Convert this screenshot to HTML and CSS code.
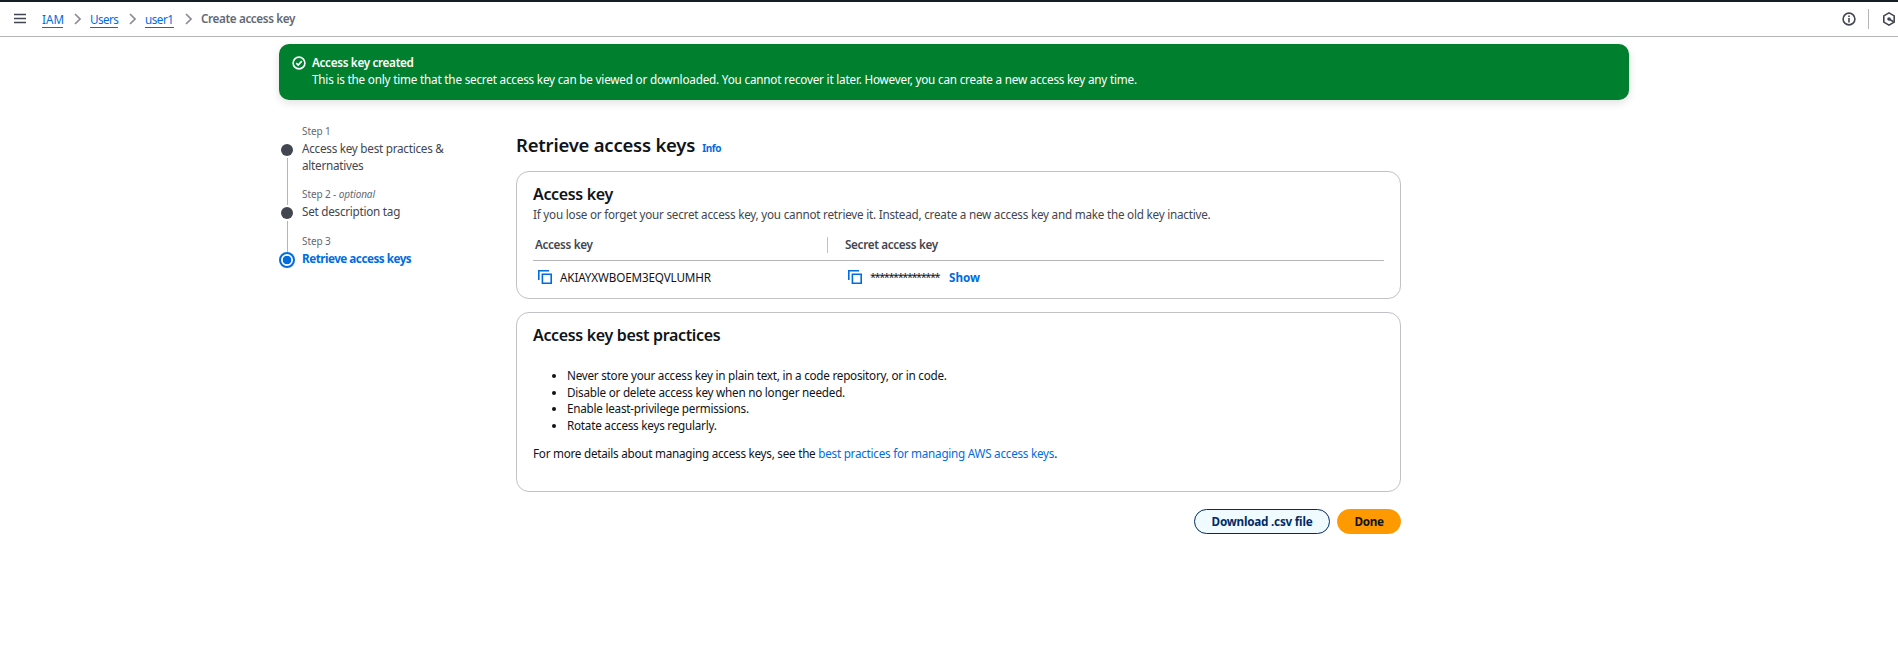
FILE: index.html
```html
<!DOCTYPE html>
<html lang="en">
<head>
<meta charset="utf-8">
<title>Create access key | IAM</title>
<link rel="stylesheet" href="styles.css">
</head>
<body>
<header class="topbar">
  <svg class="menu" viewBox="0 0 12 12"><path d="M0 1.5h12M0 5.5h12M0 9.5h12"/></svg>
  <nav class="crumbs">
    <a class="crumb iam" href="#">IAM</a>
    <svg class="chev" viewBox="0 0 7 12"><path d="M1 1l5 5-5 5"/></svg>
    <a class="crumb users" href="#">Users</a>
    <svg class="chev" viewBox="0 0 7 12"><path d="M1 1l5 5-5 5"/></svg>
    <a class="crumb user1" href="#">user1</a>
    <svg class="chev" viewBox="0 0 7 12"><path d="M1 1l5 5-5 5"/></svg>
    <span class="current">Create access key</span>
  </nav>
  <div class="tools">
    <svg class="tool" viewBox="0 0 14 14"><circle cx="7" cy="7" r="5.9"/><path d="M7 6v4.4M7 3.6v1.5"/></svg>
    <span class="tool-divider"></span>
    <svg class="tool" viewBox="0 0 14 14"><path d="M7 .9l5.2 3v6.2L7 13.1l-5.2-3V3.9z"/><path d="M7 7l4.5 2.7"/><circle class="hub" cx="7" cy="7" r="1.8"/></svg>
  </div>
</header>
<section class="flash">
  <svg class="flash-icon" viewBox="0 0 14 14"><circle cx="7" cy="7" r="5.9"/><path d="M4.2 7.1l2 2 3.6-4"/></svg>
  <div>
    <div class="flash-title">Access key created</div>
    <div class="flash-text">This is the only time that the secret access key can be viewed or downloaded. You cannot recover it later. However, you can create a new access key any time.</div>
  </div>
</section>
<div class="layout">
  <ol class="steps">
    <li class="step first">
      <div class="rail"><span class="dot"></span><span class="line"></span></div>
      <div class="step-body"><div class="step-no">Step 1</div><div class="step-name">Access key best practices &amp; alternatives</div></div>
    </li>
    <li class="step second">
      <div class="rail"><span class="dot"></span><span class="line"></span></div>
      <div class="step-body"><div class="step-no">Step 2 - <i>optional</i></div><div class="step-name">Set description tag</div></div>
    </li>
    <li class="step">
      <div class="rail"><span class="dot active"></span></div>
      <div class="step-body"><div class="step-no">Step 3</div><div class="step-name active-name">Retrieve access keys</div></div>
    </li>
  </ol>
  <main class="main">
    <div class="title-row"><h1>Retrieve access keys</h1><a class="info" href="#">Info</a></div>
    <section class="card keys">
      <h2>Access key</h2>
      <p class="desc">If you lose or forget your secret access key, you cannot retrieve it. Instead, create a new access key and make the old key inactive.</p>
      <div class="row head"><div class="th">Access key</div><div class="th secret">Secret access key</div></div>
      <div class="row values">
        <div class="cell">
          <svg class="copy" viewBox="0 0 14 14"><path d="M.8 10V.8H11M4.4 4.3h8.8v8.9H4.4z"/></svg>
          <span class="key">AKIAYXWBOEM3EQVLUMHR</span>
        </div>
        <div class="cell">
          <svg class="copy" viewBox="0 0 14 14"><path d="M.8 10V.8H11M4.4 4.3h8.8v8.9H4.4z"/></svg>
          <span class="stars">***************</span>
          <a class="show" href="#">Show</a>
        </div>
      </div>
    </section>
    <section class="card practices">
      <h2>Access key best practices</h2>
      <ul>
        <li>Never store your access key in plain text, in a code repository, or in code.</li>
        <li>Disable or delete access key when no longer needed.</li>
        <li>Enable least-privilege permissions.</li>
        <li>Rotate access keys regularly.</li>
      </ul>
      <p class="more">For more details about managing access keys, see the <a href="#">best practices for managing AWS access keys</a>.</p>
    </section>
    <div class="actions">
      <button class="btn normal">Download .csv file</button>
      <button class="btn primary">Done</button>
    </div>
  </main>
</div>
</body>
</html>
```
FILE: styles.css
```css
* { box-sizing: border-box; }
body {
  margin: 0;
  background: #fff;
  color: #0f141a;
  font: 11.7px/16.7px "Noto Sans", "Open Sans", sans-serif;
  letter-spacing: -0.235px;
  overflow: hidden;
}
svg { display: block; fill: none; flex: none; }
a { color: #006ce0; text-decoration: none; }
h1, h2, p, ul, ol { margin: 0; padding: 0; }

.topbar {
  display: flex;
  align-items: center;
  height: 37px;
  padding-left: 14px;
  border-top: 2px solid #161d26;
  border-bottom: 1px solid #b4b4bb;
}
.menu { width: 12px; height: 12px; margin-right: 16px; stroke: #424650; stroke-width: 1.6; }
.crumbs { display: flex; align-items: center; }
.crumb { height: 17px; line-height: 16px; border-bottom: 1px solid #006ce0; margin-top: 0; }
.iam { width: 21px; letter-spacing: 0; }
.users { width: 28px; letter-spacing: -0.6px; }
.user1 { width: 29px; letter-spacing: -0.5px; }
.chev { width: 7px; height: 12px; margin: 0 9px 0 11px; stroke: #8c8c94; stroke-width: 1.7; }
.current { margin-top: -1px; color: #656871; font-weight: 600; letter-spacing: -0.38px; }
.tools { display: flex; align-items: center; margin-left: auto; margin-right: 2px; }
.tool { width: 14px; height: 14px; stroke: #424650; stroke-width: 1.6; }
.hub { fill: #424650; stroke: none; }
.tool-divider { width: 1px; height: 20px; margin: 0 13px 0 12px; background: #b4b4bb; }

.flash {
  display: flex;
  width: 1350px;
  height: 56px;
  margin: 7px 0 0 279px;
  padding: 10px 13px;
  border-radius: 10px;
  background: #00802f;
  color: #fff;
  box-shadow: 0 3px 8px rgba(0, 7, 22, 0.12);
}
.flash-icon { width: 14px; height: 14px; margin: 2px 6px 0 0; stroke: #fff; stroke-width: 1.6; }
.flash-title { font-weight: 600; letter-spacing: -0.31px; }
.flash-text { letter-spacing: -0.19px; }

.layout { display: flex; padding: 23px 0 0 279px; }
.steps { width: 237px; list-style: none; }
.step { display: flex; }
.first { height: 63px; }
.second { height: 47px; }
.rail { display: flex; flex-direction: column; align-items: center; width: 16px; padding-top: 21px; margin-right: 7px; }
.dot { width: 12px; height: 12px; border-radius: 50%; background: #424650; flex: none; }
.line { width: 1px; flex: 1; margin: 2px 0 -19px; background: #b4b4bb; }
.active { width: 16px; height: 16px; margin-top: -2px; border: 2px solid #006ce0; background: radial-gradient(circle, #006ce0 4px, #fff 4.6px); }
.step-body { width: 155px; }
.step-no { font-size: 10px; line-height: 17px; color: #656871; letter-spacing: -0.1px; }
.step-name { color: #424650; letter-spacing: -0.25px; line-height: 16.7px; }
.active-name { color: #006ce0; font-weight: 700; letter-spacing: -0.5px; }

.main { width: 885px; padding-top: 9px; }
.title-row { display: flex; align-items: baseline; height: 39px; }
h1 { font-size: 18.5px; line-height: 25px; font-weight: 600; letter-spacing: -0.22px; }
.info { margin-left: 7px; font-size: 10px; font-weight: 700; letter-spacing: -0.4px; }
.card { border: 1px solid #c1c1c8; border-radius: 13px; padding: 0 16px; }
h2 { font-size: 16px; line-height: 22px; font-weight: 600; letter-spacing: -0.34px; }
.keys { height: 128px; padding-top: 11px; }
.desc { margin-top: 1px; color: #424650; letter-spacing: -0.225px; }
.row { display: grid; grid-template-columns: 311px 1fr; }
.head { height: 36px; margin-top: 2px; padding-top: 12px; border-bottom: 1px solid #b4b4bb; }
.th { height: 16px; padding-left: 2px; color: #424650; font-weight: 600; letter-spacing: -0.33px; line-height: 15px; }
.secret { padding-left: 17px; margin-left: -17px; border-left: 1px solid #c1c1c8; }
.values { padding: 8px 0 0 5px; }
.cell { display: flex; align-items: center; height: 17px; }
.copy { width: 14px; height: 14px; margin-right: 8px; stroke: #006ce0; stroke-width: 1.6; }
.key { letter-spacing: -0.15px; }
.stars { font-size: 11px; letter-spacing: -1.45px; width: 79px; }
.cell:last-child { margin-left: -1px; }
.show { font-weight: 700; letter-spacing: 0; }

.practices { height: 180px; margin-top: 13px; padding: 11px 16px 0; }
ul { margin-top: 21px; padding-left: 34px; }
.more { margin-top: 11px; letter-spacing: -0.25px; }

.actions { display: flex; justify-content: flex-end; gap: 7px; margin-top: 17px; }
.btn {
  height: 25px;
  padding: 0 0 1px;
  border: 1px solid #002b66;
  border-radius: 13px;
  font: 700 11.7px/16px "Noto Sans", "Open Sans", sans-serif;
  letter-spacing: -0.22px;
}
.normal { width: 136px; color: #002b66; background: #f0fbff; }
.primary { width: 64px; color: #0f141a; background: #ff9900; border-color: #ff9900; letter-spacing: -0.35px; }
```
